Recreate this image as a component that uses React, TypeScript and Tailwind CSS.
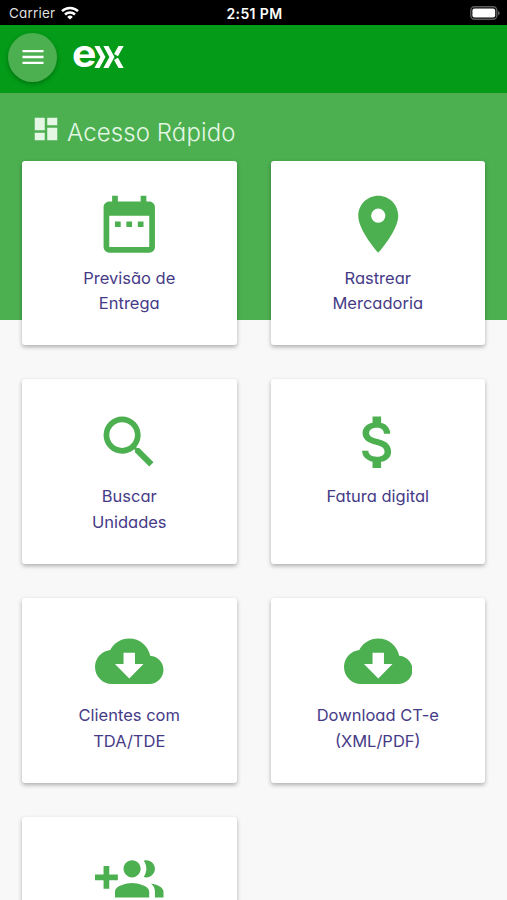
import type { ReactNode } from 'react';
import { MdAttachMoney, MdDashboard, MdDateRange, MdMenu, MdPlace, MdSearch } from 'react-icons/md';

type Shortcut = {
  id: string;
  lines: string[];
  icon: ReactNode;
};

const iconClass = 'size-[68.5px] fill-[#4caf50] text-[#4caf50]';

function CloudDownloadIcon() {
  return (
    <svg viewBox="0 0 24 24" className={iconClass}>
      <path d="M19.35 10.04C18.67 6.59 15.64 4 12 4 9.11 4 6.6 5.64 5.35 8.04 2.34 8.36 0 10.91 0 14c0 3.31 2.69 6 6 6h13c2.76 0 5-2.24 5-5 0-2.64-2.05-4.78-4.65-4.96zM17 13l-5 5-5-5h3V9h4v4h3z" />
    </svg>
  );
}

function GroupAddIcon() {
  return (
    <svg viewBox="0 0 24 24" className={iconClass}>
      <path d="M8 10H5V7H3v3H0v2h3v3h2v-3h3v-2zm10 1c1.66 0 2.99-1.34 2.99-3S19.66 5 18 5c-.32 0-.63.05-.91.14.57.81.9 1.79.9 2.86s-.34 2.04-.9 2.86c.28.09.59.14.91.14zm-5 0c1.66 0 2.99-1.34 2.99-3S14.66 5 13 5c-1.66 0-3 1.34-3 3s1.34 3 3 3zm6.62 2.16c.83.73 1.38 1.66 1.38 2.84v2h3v-2c0-1.54-2.37-2.49-4.38-2.84zM13 13c-2 0-6 1-6 3v2h12v-2c0-2-4-3-6-3z" />
    </svg>
  );
}

const shortcuts: Shortcut[] = [
  { id: 'previsao', lines: ['Previsão de', 'Entrega'], icon: <MdDateRange className={iconClass} /> },
  { id: 'rastrear', lines: ['Rastrear', 'Mercadoria'], icon: <MdPlace className={iconClass} /> },
  { id: 'unidades', lines: ['Buscar', 'Unidades'], icon: <MdSearch className={iconClass} /> },
  { id: 'fatura', lines: ['Fatura digital'], icon: <MdAttachMoney className={iconClass} /> },
  { id: 'clientes', lines: ['Clientes com', 'TDA/TDE'], icon: <CloudDownloadIcon /> },
  { id: 'cte', lines: ['Download CT-e', '(XML/PDF)'], icon: <CloudDownloadIcon /> },
  { id: 'cadastro', lines: [], icon: <GroupAddIcon /> },
];

function StatusBar() {
  return (
    <div className="grid h-[25px] grid-cols-[1fr_auto_1fr] items-center bg-black pl-[9px] pr-[7px] pt-[2px] text-[13.5px] leading-none text-white">
      <div className="flex items-center gap-[6px] text-[#dedede]">
        <span className="tracking-[0.2px]">Carrier</span>
        <svg viewBox="0 0 18 14" className="mb-[2px] h-[14px] w-[18px]" fill="none" stroke="#fff" strokeWidth="2.5">
          <path d="M1 5.2a11.4 11.4 0 0 1 16 0" />
          <path d="M4 8.5a7.2 7.2 0 0 1 10 0" />
          <path d="M9 13.6 6.2 10.900a4 4 0 0 1 5.600 0z" fill="#fff" stroke="none" />
        </svg>
      </div>
      <span className="text-center text-[14px] font-semibold tracking-[0.4px]">2:51 PM</span>
      <svg viewBox="0 0 30 14" className="mb-[2px] h-[14px] w-[30px] justify-self-end">
        <rect x="0.8" y="0.8" width="26" height="12.4" rx="3.6" fill="none" stroke="#5c5c5c" strokeWidth="1.4" />
        <rect x="2.4" y="2.4" width="22.8" height="9.2" rx="2" fill="#fff" />
        <path d="M28 5v4.4c1-.3 1.7-1.2 1.7-2.2S29 5.3 28 5z" fill="#5c5c5c" />
      </svg>
    </div>
  );
}

function Logo() {
  return (
    <div className="flex h-[23px] items-center text-white">
      <span className="-mt-[9px] w-[21.5px] origin-left scale-x-105 text-[39px] font-bold leading-[23px]">e</span>
      <svg viewBox="0 0 30 22" className="h-[22px] w-[30px]" fill="none" stroke="#fff" strokeWidth="4.5">
        <path d="M1.8-2 8.9 11 1.8 24" />
        <path d="M10.8-2l7.1 13-7.1 13" />
        <path d="M28.200-2 22 9.200M22 12.800l6.200 11.200" />
      </svg>
    </div>
  );
}

export default function App() {
  return (
    <div className="h-[900px] w-[507px] overflow-hidden bg-[#f8f8f8] font-['Inter',sans-serif] [font-feature-settings:'cv11']">
      <StatusBar />

      {/* Top bar */}
      <header className="flex h-[68px] items-center bg-[#039b17] pl-2 pb-[4px]">
        <button className="flex size-[49px] items-center justify-center rounded-full bg-[#4caf50] text-white shadow-[0_2px_4px_rgba(0,0,0,0.25)]">
          <MdMenu className="size-[28px]" />
        </button>
        <div className="ml-[15px]">
          <Logo />
        </div>
      </header>

      {/* Quick access */}
      <section className="h-[227px] bg-[#4caf50]">
        <h1 className="flex h-[67.5px] items-center pl-[31px] pt-[12px] text-[24px] font-light text-[#e4f7e5]">
          <MdDashboard className="-mt-[7px] mr-[6px] size-[30px]" />
          <span className="tracking-[0.1px]">Acesso Rápido</span>
        </h1>

        <div className="grid grid-cols-2 gap-x-[34px] gap-y-[34px] px-[22px]">
          {shortcuts.map(shortcut => (
            <div
              key={shortcut.id}
              className="flex h-[184.7px] flex-col items-center rounded-[3px] bg-white pt-[29.3px] shadow-[0_2px_4px_rgba(0,0,0,0.3)]"
            >
              {shortcut.icon}
              <p className="mt-[7.5px] text-center text-[16.5px] leading-[25.6px] text-[#463b87]">
                {shortcut.lines.map(line => (
                  <span key={line} className="block">{line}</span>
                ))}
              </p>
            </div>
          ))}
        </div>
      </section>
    </div>
  );
}
